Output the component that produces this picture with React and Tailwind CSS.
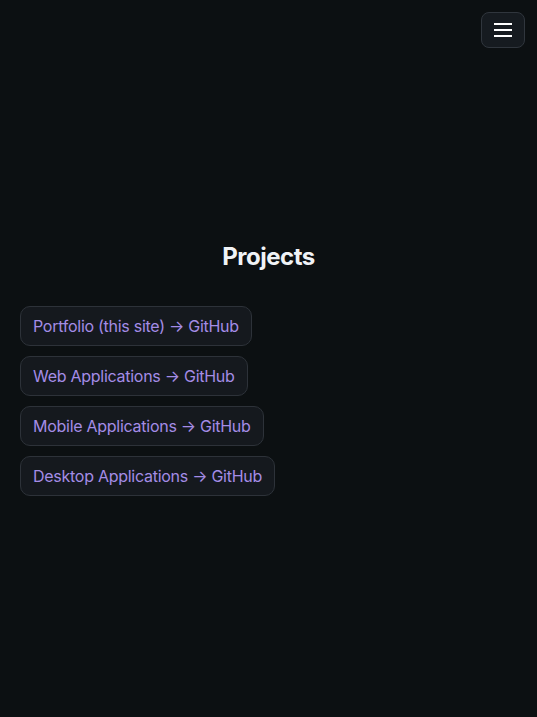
import React from "react";

const items = [
  "Portfolio (this site) → GitHub",
  "Web Applications → GitHub",
  "Mobile Applications → GitHub",
  "Desktop Applications → GitHub",
];

export default function App() {
  return (
    <div className="min-h-screen bg-[#0c1012] text-white" style={{ fontFamily: "Inter, 'Noto Sans', sans-serif" }}>
      <button className="absolute top-3 right-3 w-11 h-9 rounded-lg border border-[#30363d] bg-[#161b20] flex flex-col items-center justify-center gap-[4px]">
        <span className="block w-[18px] h-[2px] bg-white"></span>
        <span className="block w-[18px] h-[2px] bg-white"></span>
        <span className="block w-[18px] h-[2px] bg-white"></span>
      </button>
      <main className="pt-[241px] px-5">
        <h1 className="text-center text-2xl font-bold tracking-[-0.5px] text-[#f0f3f6]">Projects</h1>
        <div className="mt-[33px] flex flex-col items-start gap-[10px]">
          {items.map((t) => (
            <a key={t} href="#" className="px-3 py-[7px] rounded-[10px] border border-[#2d3239] bg-[#15191e] text-[#a48ce6] text-base leading-6 tracking-[-0.27px]">
              {t}
            </a>
          ))}
        </div>
      </main>
    </div>
  );
}
